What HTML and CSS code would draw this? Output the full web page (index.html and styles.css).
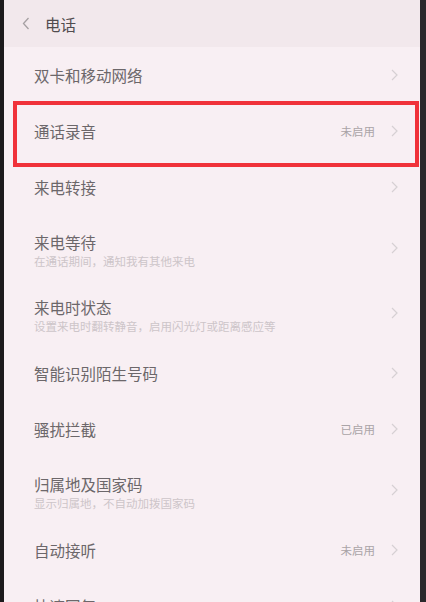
FILE: index.html
```html
<!DOCTYPE html>
<html lang="zh-CN">
<head>
    <meta charset="UTF-8">
    <meta name="viewport" content="width=device-width, initial-scale=1.0">
    <title>电话</title>
    <link rel="stylesheet" href="styles.css">
</head>
<body>
    <div class="marco">
        <div class="borde-izq"></div>
        <div class="pantalla">
            <div class="cabecera">
                <svg class="atras" width="8" height="13" viewBox="0 0 8 13"><path d="M6.5 1 L1.5 6.5 L6.5 12" fill="none" stroke="#a6a0a3" stroke-width="1.3"/></svg>
                <span class="titulo">电话</span>
            </div>

            <div class="lista">
                <div class="fila">
                    <div class="textos"><div class="nombre">双卡和移动网络</div></div>
                    <svg class="flecha" width="7" height="12" viewBox="0 0 7 12"><path d="M1 1 L6 6 L1 11" fill="none" stroke="#d6d0d3" stroke-width="1.2"/></svg>
                </div>
                <div class="fila">
                    <div class="textos"><div class="nombre">通话录音</div></div>
                    <span class="valor">未启用</span>
                    <svg class="flecha" width="7" height="12" viewBox="0 0 7 12"><path d="M1 1 L6 6 L1 11" fill="none" stroke="#d6d0d3" stroke-width="1.2"/></svg>
                </div>
                <div class="fila">
                    <div class="textos"><div class="nombre">来电转接</div></div>
                    <svg class="flecha" width="7" height="12" viewBox="0 0 7 12"><path d="M1 1 L6 6 L1 11" fill="none" stroke="#d6d0d3" stroke-width="1.2"/></svg>
                </div>
                <div class="fila doble">
                    <div class="textos">
                        <div class="nombre">来电等待</div>
                        <div class="detalle">在通话期间，通知我有其他来电</div>
                    </div>
                    <svg class="flecha" width="7" height="12" viewBox="0 0 7 12"><path d="M1 1 L6 6 L1 11" fill="none" stroke="#d6d0d3" stroke-width="1.2"/></svg>
                </div>
                <div class="fila doble">
                    <div class="textos">
                        <div class="nombre">来电时状态</div>
                        <div class="detalle">设置来电时翻转静音，启用闪光灯或距离感应等</div>
                    </div>
                    <svg class="flecha" width="7" height="12" viewBox="0 0 7 12"><path d="M1 1 L6 6 L1 11" fill="none" stroke="#d6d0d3" stroke-width="1.2"/></svg>
                </div>
                <div class="fila">
                    <div class="textos"><div class="nombre">智能识别陌生号码</div></div>
                    <svg class="flecha" width="7" height="12" viewBox="0 0 7 12"><path d="M1 1 L6 6 L1 11" fill="none" stroke="#d6d0d3" stroke-width="1.2"/></svg>
                </div>
                <div class="fila">
                    <div class="textos"><div class="nombre">骚扰拦截</div></div>
                    <span class="valor">已启用</span>
                    <svg class="flecha" width="7" height="12" viewBox="0 0 7 12"><path d="M1 1 L6 6 L1 11" fill="none" stroke="#d6d0d3" stroke-width="1.2"/></svg>
                </div>
                <div class="fila doble">
                    <div class="textos">
                        <div class="nombre">归属地及国家码</div>
                        <div class="detalle">显示归属地，不自动加拨国家码</div>
                    </div>
                    <svg class="flecha" width="7" height="12" viewBox="0 0 7 12"><path d="M1 1 L6 6 L1 11" fill="none" stroke="#d6d0d3" stroke-width="1.2"/></svg>
                </div>
                <div class="fila">
                    <div class="textos"><div class="nombre">自动接听</div></div>
                    <span class="valor">未启用</span>
                    <svg class="flecha" width="7" height="12" viewBox="0 0 7 12"><path d="M1 1 L6 6 L1 11" fill="none" stroke="#d6d0d3" stroke-width="1.2"/></svg>
                </div>
                <div class="fila">
                    <div class="textos"><div class="nombre">快速回复</div></div>
                    <svg class="flecha" width="7" height="12" viewBox="0 0 7 12"><path d="M1 1 L6 6 L1 11" fill="none" stroke="#d6d0d3" stroke-width="1.2"/></svg>
                </div>
            </div>

            <!-- recuadro rojo encima de "通话录音" -->
            <div class="marcado"></div>
        </div>
        <div class="borde-der"></div>
    </div>
</body>
</html>
```

FILE: styles.css
```css
*{
    margin: 0;
    padding: 0;
    box-sizing: border-box;
}
body{
    width: 426px;
    height: 602px;
    overflow: hidden;
    background: #f7eef2;
    font-family: "Noto Sans CJK SC", "Noto Sans", sans-serif;
}
.marco{
    display: flex;
    height: 602px;
}
.borde-izq{
    width: 4px;
    background: #1c1a1c;
}
.borde-der{
    width: 6px;
    background: #2a282b;
}
.pantalla{
    position: relative;
    flex: 1;
    background: #f8eff3;
    overflow: hidden;
}
.cabecera{
    height: 47px;
    display: flex;
    align-items: center;
    padding-left: 18px;
    background: #f2e8ec;
}
.atras{
    margin-right: 15px;
}
.titulo{
    font-size: 15.5px;
    color: #514c4f;
}
.fila{
    height: 56px;
    display: flex;
    align-items: center;
    padding-left: 30px;
    padding-right: 22px;
}
.fila.doble{
    height: 65px;
    padding-top: 6px;
}
.fila.doble .flecha{
    margin-top: -6px;
}
.textos{
    flex: 1;
}
.nombre{
    font-size: 15.5px;
    color: #6c676a;
    line-height: 22px;
}
.detalle{
    font-size: 11.5px;
    color: #cdc5c9;
    line-height: 17px;
}
.valor{
    font-size: 11.5px;
    color: #aaa4a7;
    margin-right: 16px;
}
.flecha{
    display: block;
}
.marcado{
    position: absolute;
    left: 9px;
    top: 101px;
    width: 406px;
    height: 66px;
    border: 4px solid #f0323a;
}
```
